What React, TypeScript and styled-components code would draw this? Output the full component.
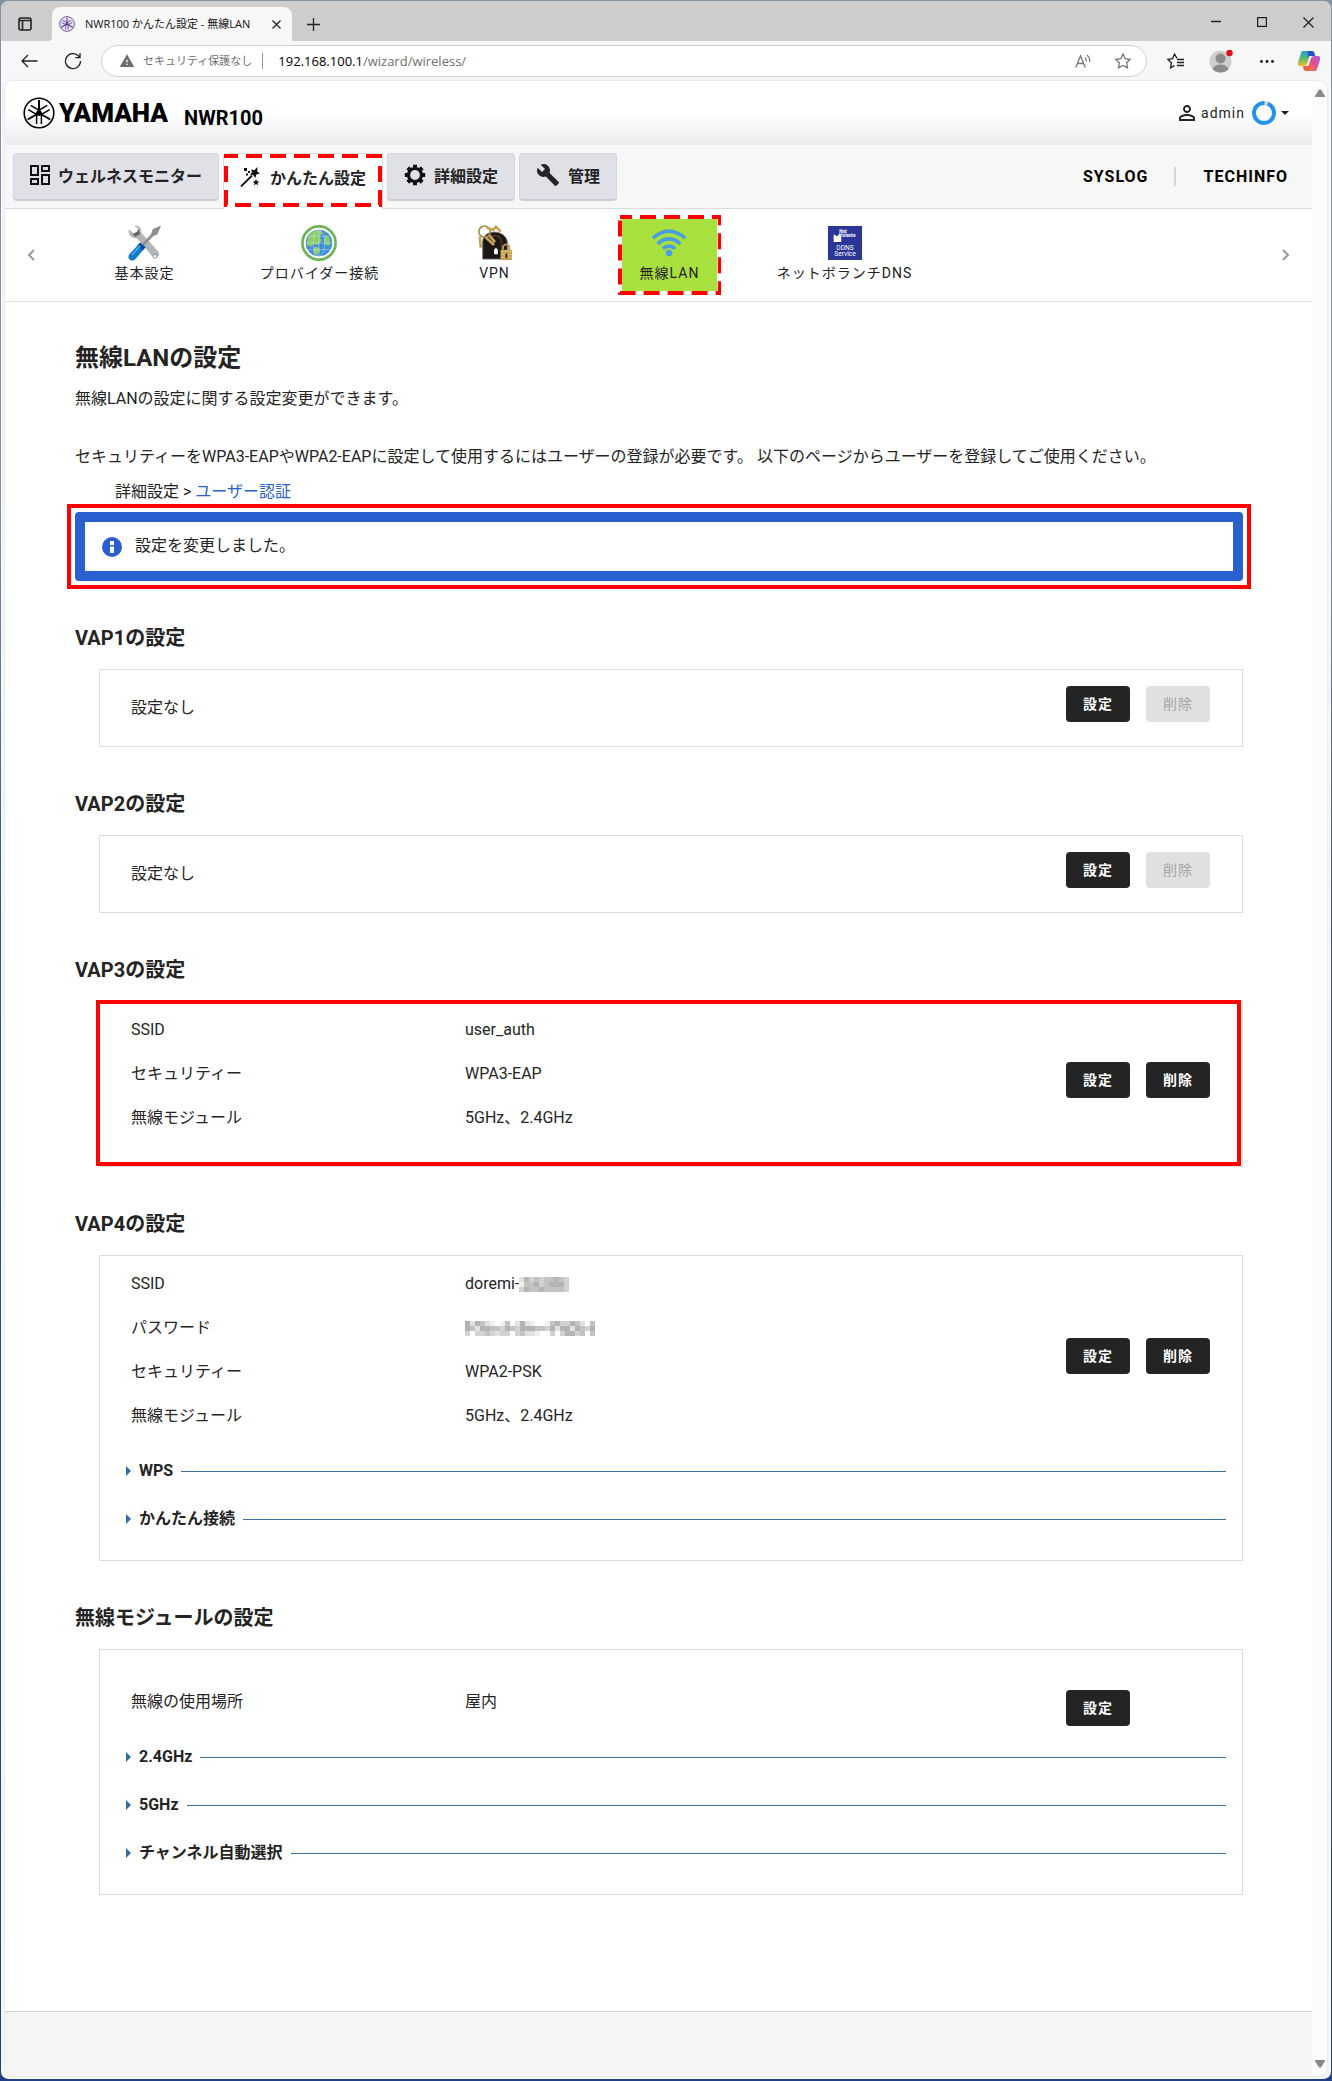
import React from "react";
import styled, { createGlobalStyle, css } from "styled-components";
import { MdBuild, MdPersonOutline, MdWarning } from "react-icons/md";

const uiFont = `Roboto, "Noto Sans CJK JP", sans-serif`;
const chromeFont = `"Open Sans", "Noto Sans CJK JP", sans-serif`;

const Global = createGlobalStyle`
  *, *::before, *::after { box-sizing: border-box; }
  body {
    margin: 0;
    background: linear-gradient(#8593a1 0, #8593a1 500px, #33548f 900px, #1f3f86 100%);
    font-family: ${uiFont};
    color: #242424;
  }
  h1, h2, p, ul, dl, dd { margin: 0; padding: 0; }
  button { font: inherit; color: inherit; border: 0; background: none; padding: 0; cursor: pointer; }
`;

/* ---------- browser window ---------- */

const BrowserWindow = styled.div`
  min-height: 100vh;
  display: flex;
  flex-direction: column;
  border: 1px solid transparent;
  border-bottom-width: 2px;
  border-radius: 9px;
  background: #f7f7f7 padding-box;
  overflow: hidden;
`;

const TitleBar = styled.div`
  display: flex;
  align-items: flex-end;
  height: 40px;
  background: #cdcdcd;
`;

const ChromeButton = styled.button<{ $w: number }>`
  display: flex;
  align-items: center;
  justify-content: center;
  flex: none;
  width: ${(p) => p.$w}px;
  height: 32px;
`;

const BrowserTab = styled.div`
  display: flex;
  align-items: center;
  gap: 10px;
  width: 240px;
  height: 34px;
  padding: 0 4px 0 7px;
  border-radius: 8px 8px 0 0;
  background: #f7f7f7;
  font: 11px/16px ${chromeFont};
  color: #111;
  white-space: nowrap;
`;

const TabTitle = styled.span`
  flex: 1;
`;

const Spacer = styled.div`
  flex: 1;
`;

const AddressRow = styled.div`
  display: flex;
  align-items: center;
  height: 40px;
  padding-left: 6px;
`;

const AddressBar = styled.div`
  flex: 1;
  display: flex;
  align-items: center;
  height: 32px;
  margin: 0 8px 0 6px;
  padding: 0 3px 0 17px;
  border: 1px solid #cfcfcf;
  border-radius: 16px;
  background: #fff;
  font: 13px/20px ${chromeFont};
  color: #6f6f6f;
  white-space: nowrap;
`;

const SecurityNote = styled.span`
  display: flex;
  align-items: center;
  gap: 8px;
  padding-right: 10px;
  margin-right: 15px;
  border-right: 1px solid #999;
  font-size: 11px;
  line-height: 16px;
`;

const Host = styled.span`
  color: #000;
`;

const Viewport = styled.div`
  flex: 1;
  display: flex;
  margin: 0 4px 3px;
  border-radius: 8px;
  background: #fff;
  overflow: hidden;
  box-shadow: 0 0 2px #c4c8cc;
`;

const Page = styled.div`
  flex: 1;
  min-width: 0;
  display: flex;
  flex-direction: column;
`;

const ScrollTrack = styled.div`
  display: flex;
  flex-direction: column;
  justify-content: space-between;
  align-items: center;
  width: 15px;
  padding: 8px 0;
  background: #fcfcfc;
`;

/* ---------- product header ---------- */

const Header = styled.header`
  display: flex;
  align-items: center;
  height: 64px;
  padding: 0 23px 0 18px;
  background: linear-gradient(#fff 50%, #ebebeb);
`;

const Brand = styled.div`
  display: flex;
  align-items: center;
  gap: 4px;
`;

const BrandName = styled.span`
  font: 900 26px/32px Roboto, sans-serif;
  color: #000;
`;

const Model = styled.span`
  margin: 10px 0 0 16px;
  font-size: 20px;
  line-height: 24px;
  font-weight: 700;
  color: #000;
`;

const UserMenu = styled.button`
  display: flex;
  align-items: center;
  gap: 2px;
  font-size: 14px;
  letter-spacing: 1px;
`;

const UserName = styled.span`
  margin-right: 5px;
`;

const Caret = styled.i`
  margin-left: 3px;
  border: 4px solid transparent;
  border-top-color: #222;
  border-bottom: 0;
`;

const NavBar = styled.nav`
  display: flex;
  align-items: flex-start;
  gap: 4px;
  height: 64px;
  padding: 8px 24px 0 8px;
  background: #f7f7f7;
  border-bottom: 1px solid #d9dadc;
`;

const NavTab = styled.button<{ $active?: boolean }>`
  position: relative;
  display: flex;
  align-items: center;
  gap: 8px;
  height: 48px;
  padding: 0 16px 4px;
  border: 1px solid #d4d6da;
  border-bottom: 2px solid #c9ccd2;
  border-radius: 4px;
  background: #dfe1e6;
  font-size: 16px;
  font-weight: 700;
  white-space: nowrap;
  ${(p) =>
    p.$active &&
    css`
      height: 56px;
      padding-bottom: 10px;
      border: 1px solid #dcdcdc;
      border-bottom: 0;
      border-radius: 4px 4px 0 0;
      background: #fff;
    `}
`;

const ToolLinks = styled.div`
  display: flex;
  align-items: center;
  margin-left: auto;
  height: 46px;
`;

const ToolLink = styled.a`
  font-size: 16px;
  font-weight: 700;
  letter-spacing: 1px;
  color: #000;
  text-decoration: none;
  & + & {
    margin-left: 25px;
    padding-left: 28px;
    border-left: 2px solid #d5d5d5;
  }
`;

const SubNav = styled.nav`
  display: flex;
  align-items: center;
  height: 93px;
  border-bottom: 1px solid #dddde0;
`;

const Arrow = styled.button`
  display: flex;
  align-items: center;
  justify-content: center;
  width: 52px;
  height: 36px;
`;

const SubList = styled.ul`
  flex: 1;
  display: flex;
  list-style: none;
`;

const SubItem = styled.li`
  flex: 0 0 175px;
  display: flex;
  justify-content: center;
`;

const SubLink = styled.a<{ $active?: boolean }>`
  position: relative;
  display: flex;
  flex-direction: column;
  align-items: center;
  height: 72px;
  padding: 6px 18px;
  background: ${(p) => (p.$active ? "#a8e03e" : "transparent")};
  color: #222;
  font-size: 14px;
  line-height: 24px;
  letter-spacing: 1px;
  text-decoration: none;
  white-space: nowrap;
`;

/* Dashed red marker laid over the current menu entry. */
const MarkerBox = styled.span<{ $inset: string }>`
  position: absolute;
  inset: ${(p) => p.$inset};
  pointer-events: none;
  svg {
    display: block;
    width: 100%;
    height: 100%;
  }
  rect {
    x: 2px;
    y: 2px;
    width: calc(100% - 4px);
    height: calc(100% - 4px);
  }
`;

/* ---------- settings ---------- */

const Main = styled.main`
  flex: 1;
  padding: 40px 69px 116px 70px;
  font-size: 16px;
  line-height: 24px;
`;

const Title = styled.h1`
  margin-bottom: 13px;
  font-size: 24px;
  line-height: 32px;
  font-weight: 700;
`;

const Lead = styled.p`
  margin-bottom: 34px;
`;

const Trail = styled.p`
  margin: 11px 0 8px 40px;
  a {
    color: #2a60d0;
    text-decoration: none;
  }
`;

const AlertFrame = styled.div`
  outline: 4px solid #f00;
  outline-offset: 4px;
`;

const Alert = styled.div`
  display: flex;
  align-items: center;
  gap: 13px;
  height: 69px;
  padding: 0 17px;
  border: 10px solid #2a5fd0;
  border-radius: 4px;
`;

const AlertText = styled.p`
  padding-bottom: 1px;
`;

const Section = styled.section`
  margin-top: 43px;
`;

const SectionTitle = styled.h2`
  font-size: 20px;
  line-height: 28px;
  font-weight: 700;
`;

const Card = styled.div<{ $marked?: boolean }>`
  position: relative;
  margin: 17px 0 0 24px;
  border: 1px solid #dcdddd;
  ${(p) =>
    p.$marked &&
    css`
      &::after {
        content: "";
        position: absolute;
        inset: -2px 1px 0 -4px;
        border: 4px solid #f00;
        pointer-events: none;
      }
    `}
`;

type BodyKind = "empty" | "list" | "withGroups" | "module";

const bodyPadding: Record<BodyKind, string> = {
  empty: "16px 32px 16px 31px",
  list: "6px 32px 26px 31px",
  withGroups: "6px 32px 9px 31px",
  module: "28px 32px 7px 31px",
};

const CardBody = styled.div<{ $kind: BodyKind }>`
  display: flex;
  align-items: center;
  justify-content: space-between;
  padding: ${(p) => bodyPadding[p.$kind]};
`;

const Empty = styled.p`
  padding: 10px 0;
`;

const Fields = styled.dl`
  flex: 1;
`;

const Field = styled.div`
  display: grid;
  grid-template-columns: 334px 1fr;
  align-items: center;
  height: 44px;
`;

const FieldValue = styled.dd`
  display: flex;
  align-items: center;
`;

const Actions = styled.div<{ $raised?: boolean }>`
  display: flex;
  gap: 16px;
  width: 144px;
  ${(p) => (p.$raised ? "padding-bottom: 8px;" : "padding-top: 12px;")}
`;

const ActionButton = styled.button`
  width: 64px;
  height: 36px;
  border-radius: 4px;
  background: #242424;
  color: #fff;
  font-size: 14px;
  font-weight: 700;
  letter-spacing: 1px;
  &:disabled {
    background: #e0e0e0;
    color: #a6a6a6;
    font-weight: 400;
  }
`;

const Groups = styled.div`
  padding: 0 16px 17px 26px;
`;

const Group = styled.button`
  display: flex;
  align-items: center;
  gap: 8px;
  width: 100%;
  height: 48px;
  font-weight: 700;
  white-space: nowrap;
  &::before {
    content: "";
    border: 5px solid transparent;
    border-left-color: #2f6ca5;
    border-right: 0;
  }
  &::after {
    content: "";
    flex: 1;
    height: 1px;
    background: #3f6f9b;
  }
`;

const Footer = styled.footer`
  height: 65px;
  border-top: 1px solid #d4d4d4;
  background: #f5f5f5;
`;

/* ---------- drawings ---------- */

const DashedMarker = ({ inset }: { inset: string }) => (
  <MarkerBox $inset={inset}>
    <svg aria-hidden="true">
      <rect fill="none" stroke="#f00" strokeWidth="4" strokeDasharray="16 8" strokeDashoffset="4" />
    </svg>
  </MarkerBox>
);

const TuningForks = ({ size, color, fill = "none" }: { size: number; color: string; fill?: string }) => (
  <svg width={size} height={size} viewBox="0 0 32 32" fill="none" stroke={color} aria-hidden="true">
    <circle cx="16" cy="16" r="14.8" strokeWidth="1.6" fill={fill} />
    {[0, 120, 240].map((a) => (
      <g key={a} transform={`rotate(${a} 16 16)`} strokeWidth="1.5">
        <path d="M16 3v14" strokeWidth="2" />
        <path d="M13.6 27V17.5q0-3 2.4-3t2.4 3V27" />
      </g>
    ))}
  </svg>
);

const DashboardIcon = () => (
  <svg width="20" height="20" viewBox="0 0 20 20" fill="none" stroke="#111" strokeWidth="2" aria-hidden="true">
    <path d="M1 1h7v9H1zM12 1h7v5h-7zM1 14h7v5H1zM12 10h7v9h-7z" />
  </svg>
);

const WandIcon = () => (
  <svg width="22" height="20" viewBox="0 0 22 20" fill="#111" aria-hidden="true">
    <path d="M1 19.500 12 8.500" stroke="#111" strokeWidth="1.800" />
    <path d="M11 2.500l3.200.8L17.500 0l-.3 4.600 2.800 2-3.600.9-1.200 3.600-2-3.200-3.400-.4 2.300-2.200zM16 12l1 2.200 2.300.2-1.800 1.600.6 2.300-2.100-1.200-2.100 1.200.6-2.300-1.800-1.600 2.300-.2z" />
    <path d="M4 1h3v3H4zM8 4h2v2H8zM6 6.500h2v2H6z" />
  </svg>
);

const GearIcon = () => (
  <svg width="22" height="22" viewBox="0 0 22 22" fill="none" stroke="#111" aria-hidden="true">
    <circle cx="11" cy="11" r="6.500" strokeWidth="3.200" />
    {[0, 45, 90, 135, 180, 225, 270, 315].map((a) => (
      <path key={a} d="M11 0.800v3" strokeWidth="4" transform={`rotate(${a} 11 11)`} />
    ))}
  </svg>
);

const ToolsIcon = () => (
  <svg width="36" height="38" viewBox="0 0 36 38" aria-hidden="true">
    <path d="M1 4.500 6 9l3.500-1.500L11 4 6.500.8C11-.5 14.500 2.500 14 8l18 20c3 4-2 9-6 5.500L9.500 14C4 15-.5 10 1 4.500z" fill="#b4b6b8" />
    <path d="M5 10l3 2.500 5-3-2-5.500L9.500 7.500 6 9z" fill="#626569" />
    <circle cx="28.500" cy="33" r="2" fill="#fff" stroke="#8a8c8f" />
    <path d="M35 .5l-9 4-1.500 5L15 20l1.800 1.800L27 11.500l4-1.500z" fill="#8d8f91" />
    <path d="M13 18.500l5.500 5L7.500 36.500C3 39.500-1.500 35 1.500 31z" fill="#0f79cf" />
    <path d="M13 18.500l5.500 5-3 3.500-5.500-5z" fill="#0a4f9e" />
    <path d="M4 32l9-10" stroke="#59aef0" strokeWidth="1.500" />
  </svg>
);

const GlobeIcon = () => (
  <svg width="38" height="38" viewBox="0 0 38 38" aria-hidden="true">
    <circle cx="19" cy="19" r="17.500" fill="#fff" stroke="#6fb257" strokeWidth="2.800" />
    <circle cx="19" cy="19" r="14" fill="#3f8fd6" />
    <path d="M7 13c3-6 8-8 14-7l2 3-4 3 3 4-4 5-5-1-2 3-5-2zM14 23l5 1 1 4-4 4-3-3zM26 10l5 5-1 7-4-1-2-5z" fill="#8ccf6a" />
    <g fill="none" stroke="#c9e6f7" strokeWidth=".5">
      <ellipse cx="19" cy="19" rx="6" ry="14" />
      <path d="M5 19h28M7 12h24M7 26h24M19 5v28" />
    </g>
  </svg>
);

const VpnIcon = () => (
  <svg width="38" height="38" viewBox="0 0 38 38" aria-hidden="true">
    <path d="M6 36V18C6 4 30 4 32 18v18z" fill="#1d1713" stroke="#70777c" />
    <path d="M12 14c6-5 14-3 14 5v14" fill="none" stroke="#4a352a" strokeWidth="2" />
    <circle cx="8" cy="7" r="6" fill="none" stroke="#a78a4c" strokeWidth="1.700" />
    <path d="M10 3l7 2 3-3 5 5M13 11l6 7M3 12l1 12M9 13l9 8" stroke="#c4a25a" strokeWidth="2.800" fill="none" />
    <path d="M18 26l2-2 2 2v5h-4z" fill="#fff" />
    <path d="M27.500 26v-3.500q3.500-4 6.500 0V26" fill="none" stroke="#b4965a" strokeWidth="2" />
    <path d="M25 26h12v11H25z" fill="#c6a250" />
    <path d="M25 28h12M25 31h12M25 34h12" stroke="#dec482" />
    <path d="M31 30v5" stroke="#3b2a10" strokeWidth="2" />
  </svg>
);

const WifiIcon = () => (
  <svg width="38" height="38" viewBox="0 0 38 38" fill="none" stroke="#4a9de0" strokeWidth="3.800" aria-hidden="true">
    <path d="M2 14Q19-1 36 14M7 20q12-10.500 24 0M12.500 25q6.500-5.500 13 0" />
    <circle cx="19" cy="29.500" r="3.500" fill="#4a9de0" stroke="none" />
  </svg>
);

const DdnsIcon = () => (
  <svg width="36" height="38" viewBox="0 0 36 38" fill="#fff" fontFamily="Roboto, sans-serif" letterSpacing="0" aria-hidden="true">
    <path fill="#2b3696" d="M0 1h36v36H0z" />
    <path d="M6 10l4 2 2-3 2 3v6H6z" />
    <text x="12" y="8.500" fontSize="5" fontWeight="700">Net</text>
    <text x="12" y="13" fontSize="5" fontWeight="700">Volante</text>
    <text x="18" y="26" fontSize="7" textAnchor="middle">DDNS</text>
    <text x="18" y="33" fontSize="7" textAnchor="middle">Service</text>
  </svg>
);

const RingIcon = () => (
  <svg width="24" height="24" viewBox="0 0 24 24" fill="none" strokeWidth="4" aria-hidden="true">
    <circle cx="12" cy="12" r="10" stroke="#2493f0" />
    <path d="M12.500 2q1.800 0 3.200.6" stroke="#dcdcdc" />
  </svg>
);

const InfoIcon = () => (
  <svg width="20" height="20" viewBox="0 0 20 20" aria-hidden="true">
    <circle cx="10" cy="10" r="10" fill="#2a5fd0" />
    <path d="M8 4h4v4H8zM8 9.500h4V16H8z" fill="#fff" />
  </svg>
);

const StarOutline = () => <path d="M8 1l2.200 4.600 5 .7-3.600 3.500.9 5L8 12.400l-4.500 2.400.9-5L.8 6.300l5-.7z" />;

const CopilotIcon = () => (
  <svg width="22" height="20" viewBox="0 0 22 20" aria-hidden="true">
    <defs>
      <linearGradient id="cpA" x1="0" y1="0" x2="0" y2="1">
        <stop offset="0" stopColor="#1c9de0" />
        <stop offset=".5" stopColor="#5cbf6a" />
        <stop offset="1" stopColor="#f0c22c" />
      </linearGradient>
      <linearGradient id="cpB" x1="0" y1="1" x2="1" y2="0">
        <stop offset="0" stopColor="#f5793a" />
        <stop offset=".5" stopColor="#e7508c" />
        <stop offset="1" stopColor="#a463e8" />
      </linearGradient>
    </defs>
    <path d="M5 0h8L9 13q-1 2-3 2H2q-3 0-2-4L3 2q.5-2 2-2z" fill="url(#cpA)" />
    <path d="M10 0h4q2 0 2.500 2l.7 3H12q-2 0-2.500 2z" fill="#2352c4" />
    <path d="M17 20H9l4-13q1-2 3-2h4q3 0 2 4l-3 9q-.5 2-2 2z" fill="url(#cpB)" />
    <path d="M12 20H8q-2 0-2.500-2L5 15h4q2 0 3-2z" fill="#f0603c" />
  </svg>
);

/* Masked characters, drawn as a coarse mosaic. Each digit is the darkness of one cell. */
const Mosaic = ({ rows }: { rows: string[] }) => (
  <svg width={rows[0].length * 5} height="15" shapeRendering="crispEdges" aria-label="非表示" role="img">
    {rows.map((row, y) =>
      row.split("").map((c, x) => {
        const v = 255 - Number(c) * 15;
        return <rect key={`${x}-${y}`} x={x * 5} y={y * 5} width="5" height="5" fill={`rgb(${v},${v},${v})`} />;
      })
    )}
  </svg>
);

const stroke = { fill: "none", stroke: "#222", strokeWidth: 1.3 };

/* ---------- page parts ---------- */

const BrowserChrome = () => (
  <>
    <TitleBar>
      <ChromeButton $w={47} aria-label="タブ操作">
        <svg width="14" height="16" {...stroke} strokeWidth={1.6}>
          <rect x="1" y="1" width="12" height="12" rx="2" />
          <path d="M1 3.500h12M4.500 4v9" />
        </svg>
      </ChromeButton>
      <svg width="4" height="4" aria-hidden="true">
        <path d="M4 0v4H0q4 0 4-4z" fill="#f7f7f7" />
      </svg>
      <BrowserTab>
        <TuningForks size={16} color="#5b3a8c" fill="#e9e2f2" />
        <TabTitle>NWR100 かんたん設定 - 無線LAN</TabTitle>
        <ChromeButton $w={24} aria-label="タブを閉じる">
          <svg width="9" height="9" {...stroke}>
            <path d="M.5.5l8 8M8.500.5l-8 8" />
          </svg>
        </ChromeButton>
      </BrowserTab>
      <ChromeButton $w={42} aria-label="新しいタブ">
        <svg width="13" height="15" {...stroke}>
          <path d="M6.500 0v13M0 6.500h13" />
        </svg>
      </ChromeButton>
      <Spacer />
      <ChromeButton $w={46} aria-label="最小化">
        <svg width="10" height="18" {...stroke}>
          <path d="M0 5.500h10" />
        </svg>
      </ChromeButton>
      <ChromeButton $w={46} aria-label="最大化">
        <svg width="10" height="16" {...stroke}>
          <rect x=".6" y=".6" width="8.800" height="8.800" />
        </svg>
      </ChromeButton>
      <ChromeButton $w={46} aria-label="閉じる">
        <svg width="11" height="16" {...stroke}>
          <path d="M.5.5l10 10M10.500.5l-10 10" />
        </svg>
      </ChromeButton>
    </TitleBar>
    <AddressRow>
      <ChromeButton $w={44} aria-label="戻る">
        <svg width="17" height="14" {...stroke}>
          <path d="M16.500 7H1M7 1L1 7l6 6" />
        </svg>
      </ChromeButton>
      <ChromeButton $w={44} aria-label="更新">
        <svg width="18" height="18" {...stroke}>
          <path d="M16.500 9A7.500 7.500 0 1 1 14 3.500L16 5.500M16 1v4.700h-4.700" />
        </svg>
      </ChromeButton>
      <AddressBar>
        <SecurityNote>
          <MdWarning size={16} />
          セキュリティ保護なし
        </SecurityNote>
        <Host>192.168.100.1</Host>/wizard/wireless/
        <Spacer />
        <ChromeButton $w={40} aria-label="音声で読み上げる">
          <svg width="16" height="14" {...stroke} stroke="#777">
            <path d="M.7 13.500L5.500 2l4.800 11.500M2.500 9.500h6M10 3.500q1.500 1.500 1 4M12 1q3.500 3 2.500 7" />
          </svg>
        </ChromeButton>
        <ChromeButton $w={40} aria-label="お気に入りに追加">
          <svg width="16" height="16" {...stroke} stroke="#777">
            <StarOutline />
          </svg>
        </ChromeButton>
      </AddressBar>
      <ChromeButton $w={40} aria-label="お気に入り">
        <svg width="17" height="16" {...stroke}>
          <path d="M10 5.300L7.500 1 5.600 5.600l-4.800.7 3.600 3.500-.9 5 4-2.200M10 6.500h7M10 9.500h7M10 12.500h7" />
        </svg>
      </ChromeButton>
      <ChromeButton $w={52} aria-label="プロファイル">
        <svg width="24" height="24" viewBox="0 0 24 24">
          <circle cx="11.500" cy="12.500" r="11" fill="#cfcecd" />
          <circle cx="11.500" cy="9.500" r="5" fill="#8d8b89" />
          <path d="M3.500 20q2-4.500 8-4.500t8 4.500q-3 3.500-8 3.500t-8-3.500z" fill="#8d8b89" />
          <circle cx="20.500" cy="4" r="3.200" fill="#e30b17" />
        </svg>
      </ChromeButton>
      <ChromeButton $w={40} aria-label="その他">
        <svg width="14" height="3" fill="#111">
          <circle cx="1.500" cy="1.500" r="1.400" />
          <circle cx="7" cy="1.500" r="1.400" />
          <circle cx="12.500" cy="1.500" r="1.400" />
        </svg>
      </ChromeButton>
      <ChromeButton $w={44} aria-label="Copilot">
        <CopilotIcon />
      </ChromeButton>
    </AddressRow>
  </>
);

const subItems = [
  { label: "基本設定", icon: <ToolsIcon /> },
  { label: "プロバイダー接続", icon: <GlobeIcon /> },
  { label: "VPN", icon: <VpnIcon /> },
  { label: "無線LAN", icon: <WifiIcon />, active: true },
  { label: "ネットボランチDNS", icon: <DdnsIcon /> },
];

const FieldList = ({ rows }: { rows: [string, React.ReactNode][] }) => (
  <Fields>
    {rows.map(([label, value]) => (
      <Field key={label}>
        <dt>{label}</dt>
        <FieldValue>{value}</FieldValue>
      </Field>
    ))}
  </Fields>
);

const EmptyVap = ({ name }: { name: string }) => (
  <Section>
    <SectionTitle>{name}の設定</SectionTitle>
    <Card>
      <CardBody $kind="empty">
        <Empty>設定なし</Empty>
        <Actions $raised>
          <ActionButton>設定</ActionButton>
          <ActionButton disabled>削除</ActionButton>
        </Actions>
      </CardBody>
    </Card>
  </Section>
);

export default function App() {
  return (
    <>
      <Global />
      <BrowserWindow>
        <BrowserChrome />
        <Viewport>
          <Page>
            <Header>
              <Brand>
                <TuningForks size={32} color="#000" />
                <BrandName>YAMAHA</BrandName>
              </Brand>
              <Model>NWR100</Model>
              <Spacer />
              <UserMenu>
                <MdPersonOutline size={24} />
                <UserName>admin</UserName>
                <RingIcon />
                <Caret />
              </UserMenu>
            </Header>
            <NavBar>
              <NavTab>
                <DashboardIcon />
                ウェルネスモニター
              </NavTab>
              <NavTab $active>
                <WandIcon />
                かんたん設定
                <DashedMarker inset="0 0 2px" />
              </NavTab>
              <NavTab>
                <GearIcon />
                詳細設定
              </NavTab>
              <NavTab>
                <MdBuild size={24} />
                管理
              </NavTab>
              <ToolLinks>
                <ToolLink href="#syslog">SYSLOG</ToolLink>
                <ToolLink href="#techinfo">TECHINFO</ToolLink>
              </ToolLinks>
            </NavBar>
            <SubNav>
              <Arrow aria-label="前へ">
                <svg width="8" height="12" fill="none" stroke="#999" strokeWidth="2">
                  <path d="M7 1L2 6l5 5" />
                </svg>
              </Arrow>
              <SubList>
                {subItems.map((item) => (
                  <SubItem key={item.label}>
                    <SubLink href="#wizard" $active={item.active}>
                      {item.icon}
                      {item.label}
                      {item.active && <DashedMarker inset="-4px" />}
                    </SubLink>
                  </SubItem>
                ))}
              </SubList>
              <Arrow aria-label="次へ">
                <svg width="8" height="12" fill="none" stroke="#999" strokeWidth="2">
                  <path d="M1 1l5 5-5 5" />
                </svg>
              </Arrow>
            </SubNav>
            <Main>
              <Title>無線LANの設定</Title>
              <Lead>無線LANの設定に関する設定変更ができます。</Lead>
              <p>
                セキュリティーをWPA3-EAPやWPA2-EAPに設定して使用するにはユーザーの登録が必要です。
                以下のページからユーザーを登録してご使用ください。
              </p>
              <Trail>
                詳細設定 &gt; <a href="#user-auth">ユーザー認証</a>
              </Trail>
              <AlertFrame>
                <Alert role="status">
                  <InfoIcon />
                  <AlertText>設定を変更しました。</AlertText>
                </Alert>
              </AlertFrame>

              <EmptyVap name="VAP1" />
              <EmptyVap name="VAP2" />

              <Section>
                <SectionTitle>VAP3の設定</SectionTitle>
                <Card $marked>
                  <CardBody $kind="list">
                    <FieldList
                      rows={[
                        ["SSID", "user_auth"],
                        ["セキュリティー", "WPA3-EAP"],
                        ["無線モジュール", "5GHz、2.4GHz"],
                      ]}
                    />
                    <Actions>
                      <ActionButton>設定</ActionButton>
                      <ActionButton>削除</ActionButton>
                    </Actions>
                  </CardBody>
                </Card>
              </Section>

              <Section>
                <SectionTitle>VAP4の設定</SectionTitle>
                <Card>
                  <CardBody $kind="withGroups">
                    <FieldList
                      rows={[
                        [
                          "SSID",
                          <>
                            doremi-
                            <Mosaic rows={["2534344543", "1445345553", "3544544443"]} />
                          </>,
                        ],
                        [
                          "パスワード",
                          <Mosaic
                            rows={[
                              "52542101402521001453354204",
                              "54255443543555443525525435",
                              "30334323303422100303553404",
                            ]}
                          />,
                        ],
                        ["セキュリティー", "WPA2-PSK"],
                        ["無線モジュール", "5GHz、2.4GHz"],
                      ]}
                    />
                    <Actions>
                      <ActionButton>設定</ActionButton>
                      <ActionButton>削除</ActionButton>
                    </Actions>
                  </CardBody>
                  <Groups>
                    <Group>WPS</Group>
                    <Group>かんたん接続</Group>
                  </Groups>
                </Card>
              </Section>

              <Section>
                <SectionTitle>無線モジュールの設定</SectionTitle>
                <Card>
                  <CardBody $kind="module">
                    <FieldList rows={[["無線の使用場所", "屋内"]]} />
                    <Actions>
                      <ActionButton>設定</ActionButton>
                    </Actions>
                  </CardBody>
                  <Groups>
                    <Group>2.4GHz</Group>
                    <Group>5GHz</Group>
                    <Group>チャンネル自動選択</Group>
                  </Groups>
                </Card>
              </Section>
            </Main>
            <Footer />
          </Page>
          <ScrollTrack>
            <svg width="10" height="8" fill="#8a8a8a" aria-hidden="true">
              <path d="M4 0.500h2L10 7v1H0V7z" />
            </svg>
            <svg width="10" height="8" fill="#8a8a8a" aria-hidden="true">
              <path d="M4 7.500h2L10 1V0H0v1z" />
            </svg>
          </ScrollTrack>
        </Viewport>
      </BrowserWindow>
    </>
  );
}
